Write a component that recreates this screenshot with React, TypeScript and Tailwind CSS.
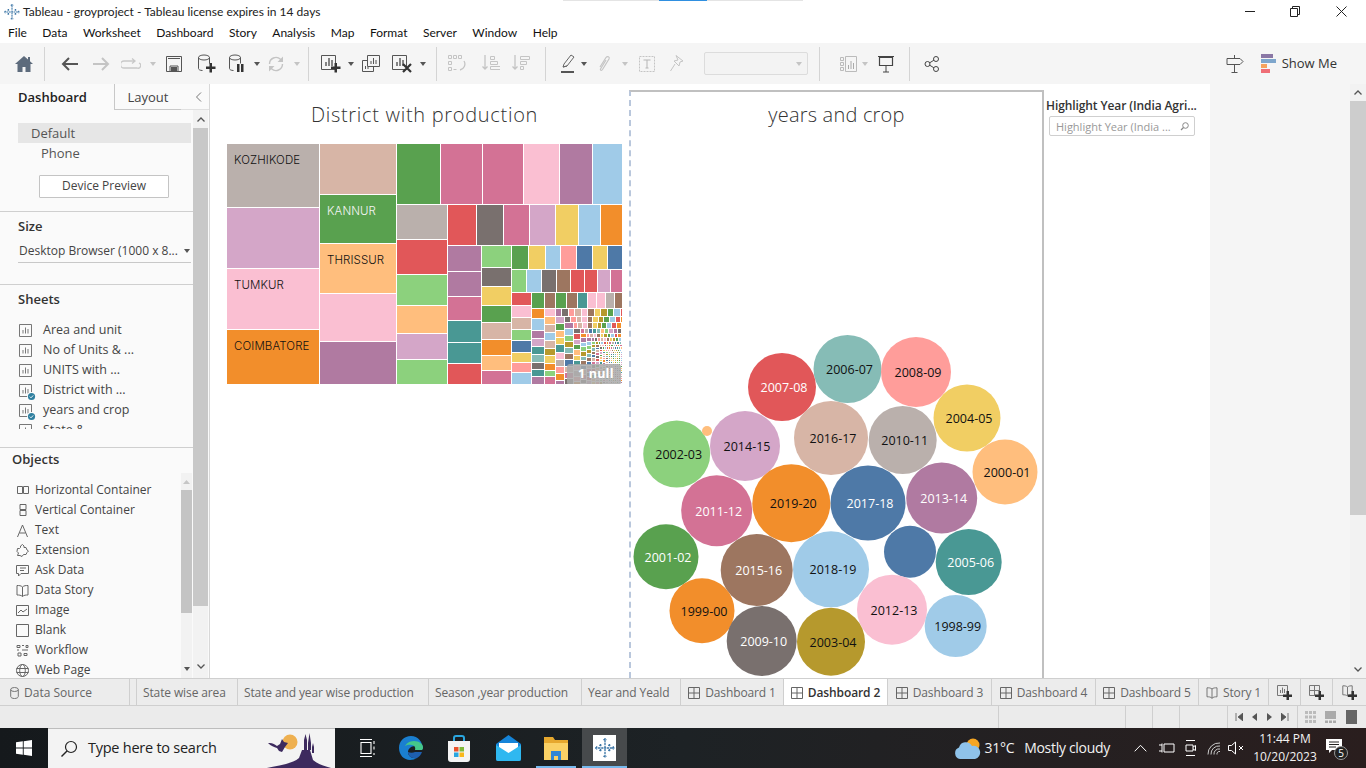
import type { ReactNode } from 'react';

const steel = '#4e79a7', blue = '#a0cbe8', orange = '#f28e2b', peach = '#ffbe7d', green = '#59a14f';
const lime = '#8cd17d', olive = '#b6992d', yellow = '#f1ce63', teal = '#499894', mint = '#86bcb6';
const red = '#e15759', salmon = '#ff9d9a', dgray = '#79706e', gray = '#bab0ac', pink = '#d37295';
const lpink = '#fabfd2', purple = '#b07aa1', lilac = '#d4a6c8', brown = '#9d7660', tan = '#d7b5a6';

type Cell = [number, number, number, number, string];

// column of cells between x0 and x1, each one [y0, y1, colour]
const col = (x0: number, x1: number, items: [number, number, string][]): Cell[] =>
  items.map(([y0, y1, c]) => [x0, y0, x1, y1, c] as Cell);
// row of cells between y0 and y1, each one [x0, x1, colour]
const row = (y0: number, y1: number, items: [number, number, string][]): Cell[] =>
  items.map(([x0, x1, c]) => [x0, y0, x1, y1, c] as Cell);

const palette = [lilac, salmon, brown, green, orange, steel, peach, purple, tan, yellow, blue, pink, teal, lime, dgray, lpink, olive, red, gray, mint];

// the long tail of the treemap: cells that get smaller towards the corner
function tinyCells(): Cell[] {
  const out: Cell[] = [];
  let x = 556, y = 309, size = 9, n = 0;
  const x1 = 622, y1 = 384;
  while (x < x1 - 1 && y < y1 - 1) {
    const rh = Math.max(2, size * 0.85);
    for (let cx = x; cx < x1; cx += Math.max(2, size * 0.72)) {
      out.push([cx, y, Math.min(x1, cx + Math.max(2, size * 0.72) - 1), y + rh - 1, palette[(n += 7) % 20]]);
    }
    y += rh;
    const cw = Math.max(2, size * 1.05);
    for (let cy = y; cy < y1; cy += Math.max(2, size * 0.8)) {
      out.push([x, cy, x + cw - 1, Math.min(y1, cy + Math.max(2, size * 0.8) - 1), palette[(n += 3) % 20]]);
    }
    x += cw;
    size *= 0.86;
  }
  return out;
}

const cells: Cell[] = [
  ...col(227, 319, [[144, 207, gray], [208, 268, lilac], [269, 329, lpink], [330, 384, orange]]),
  ...col(320, 396, [[144, 194, tan], [195, 243, green], [244, 293, peach], [294, 341, lpink], [342, 384, purple]]),
  ...row(144, 204, [[397, 440, green], [441, 482, pink], [483, 523, pink], [524, 559, lpink], [560, 592, purple], [593, 622, blue]]),
  ...col(397, 447, [[205, 239, gray], [240, 274, red], [275, 305, lime], [306, 333, peach], [334, 359, lilac], [360, 384, lime]]),
  ...row(205, 245, [[448, 476, red], [477, 503, dgray], [504, 529, pink], [530, 555, lilac], [556, 578, yellow], [579, 600, blue], [601, 622, orange]]),
  ...col(448, 481, [[246, 271, purple], [272, 296, purple], [297, 320, pink], [321, 342, teal], [343, 363, teal], [364, 384, red]]),
  ...col(482, 511, [[246, 267, lime], [268, 286, dgray], [287, 305, yellow], [306, 322, green], [323, 339, tan], [340, 355, orange], [356, 370, peach], [371, 384, pink]]),
  ...row(246, 269, [[512, 528, green], [529, 545, yellow], [546, 560, blue], [561, 576, salmon], [577, 592, steel], [593, 607, yellow], [608, 622, steel]]),
  ...row(270, 292, [[512, 526, lime], [527, 541, blue], [542, 556, dgray], [557, 570, brown], [571, 584, red], [585, 597, red], [598, 610, lilac], [611, 622, pink]]),
  ...col(512, 531, [[293, 305, red], [306, 317, lpink], [318, 329, tan], [330, 340, lime], [341, 352, steel], [353, 362, yellow], [363, 372, salmon], [373, 384, blue]]),
  ...row(293, 308, [[532, 544, green], [545, 555, brown], [556, 566, green], [567, 577, brown], [578, 587, teal], [588, 596, lpink], [597, 605, lpink], [606, 614, gray], [615, 622, brown]]),
  ...col(532, 544, [[309, 318, orange], [319, 330, blue], [331, 338, purple], [339, 346, lilac], [347, 354, teal], [355, 362, mint], [363, 369, dgray], [370, 376, teal], [377, 384, purple]]),
  ...col(545, 555, [[309, 316, lpink], [317, 324, peach], [325, 332, tan], [333, 340, blue], [341, 348, tan], [349, 355, olive], [356, 363, yellow], [364, 370, orange], [371, 376, lime], [377, 384, pink]]),
  ...tinyCells(),
];

type Bubble = [number, number, number, string, string, string];

const bubbles: Bubble[] = [
  [847.5, 369, 34, mint, '2006-07', '#111'],
  [916, 372, 35, salmon, '2008-09', '#111'],
  [782, 387, 34, red, '2007-08', '#fff'],
  [967, 418, 33.5, yellow, '2004-05', '#111'],
  [831, 438, 37, tan, '2016-17', '#111'],
  [902.7, 440, 34, gray, '2010-11', '#111'],
  [745, 446, 35, lilac, '2014-15', '#111'],
  [676.7, 454, 33.5, lime, '2002-03', '#111'],
  [707, 431, 5, peach, '', '#111'],
  [1005, 472, 32.5, peach, '2000-01', '#111'],
  [941.7, 498, 35.5, purple, '2013-14', '#fff'],
  [868, 503, 37.5, steel, '2017-18', '#fff'],
  [791.3, 503.3, 39, orange, '2019-20', '#111'],
  [716.7, 510.7, 35.5, pink, '2011-12', '#fff'],
  [910, 551.7, 26, steel, '', '#fff'],
  [968.7, 562, 33, teal, '2005-06', '#fff'],
  [666, 556.7, 32.5, green, '2001-02', '#fff'],
  [756.7, 570, 36, brown, '2015-16', '#fff'],
  [831, 569.3, 38, blue, '2018-19', '#111'],
  [892, 609.7, 35, lpink, '2012-13', '#111'],
  [702, 610.7, 32.5, orange, '1999-00', '#111'],
  [955.7, 626, 31, blue, '1998-99', '#111'],
  [761.7, 641, 35, dgray, '2009-10', '#fff'],
  [831, 641.7, 34, olive, '2003-04', '#111'],
];

function Svg({ w = 18, h = 18, vb, children, className }: { w?: number; h?: number; vb?: string; children: ReactNode; className?: string }) {
  return (
    <svg width={w} height={h} viewBox={vb ?? `0 0 ${w} ${h}`} fill="none" className={className}>
      {children}
    </svg>
  );
}

const Caret = ({ on = true }: { on?: boolean }) => (
  <Svg w={6} h={4}><path d="M0 0h6L3 4z" fill={on ? '#555' : '#c4c4c4'} /></Svg>
);

const Sep = ({ className }: { className: string }) => <div className={`w-px h-[34px] bg-[#d4d4d4] ${className}`} />;

const Plus = ({ x, y }: { x: number; y: number }) => (
  <path d={`M${x + 3.5} ${y}h2.5v3.5h3.5v2.5h-3.5v3.5h-2.5v-3.5h-3.5v-2.5h3.5z`} fill="#333" />
);

const Bars = ({ c = '#555' }: { c?: string }) => <path d="M5 12V8M8 12V4M11 12V6" stroke={c} strokeWidth="1.4" />;

function TabGrid() {
  return (
    <Svg w={12} h={12}><path d="M.5.5h11v11H.5zM6 .5v11M.5 6h11" stroke="#666" /></Svg>
  );
}

function SheetIcon({ badge }: { badge?: boolean }) {
  return (
    <span className="relative w-[13px] h-[13px] shrink-0">
      <Svg w={13} h={13}>
        <path d="M.5.5h12v12H.5z" stroke="#777" />
        <path d="M4 9.5V6M6.5 9.5V3.5M9 9.5V5" stroke="#777" />
      </Svg>
      {badge && (
        <Svg w={9} h={9} className="absolute left-[8px] top-[8px]">
          <circle cx="4.5" cy="4.5" r="4.5" fill="#fafafa" />
          <circle cx="4.5" cy="4.5" r="3.6" fill="#2f7f9f" />
          <path d="m2.8 4.600 1.200 1.200 2.200-2.400" stroke="#fff" strokeWidth=".9" />
        </Svg>
      )}
    </span>
  );
}

function SheetRow({ label, badge }: { label: string; badge?: boolean }) {
  return (
    <div className="flex items-center h-5 pl-[19px] gap-[11px] text-[12.5px] text-[#444] leading-none shrink-0">
      <SheetIcon badge={badge} />
      <span>{label}</span>
    </div>
  );
}

function ObjectRow({ label, icon }: { label: string; icon: ReactNode }) {
  return (
    <div className="flex items-center h-5 pl-[16px] text-[12px] text-[#444] leading-none shrink-0">
      <span className="w-[13px] h-[13px] flex items-center justify-center shrink-0 mr-[6px]">{icon}</span>
      <span>{label}</span>
    </div>
  );
}

const stroke = '#666';

function Sidebar() {
  return (
    <aside className="w-[210px] shrink-0 h-full bg-[#fafafa] border-r border-[#d8d8d8] flex flex-col overflow-hidden">
      <div className="h-[26px] flex shrink-0 text-[13px] leading-none">
        <div className="w-[114px] flex items-center pl-[18px] font-semibold text-[#222]">Dashboard</div>
        <div className="w-[67px] flex items-center justify-center pt-[2px] bg-[#fafafa] border-l border-b border-[#c8c8c8] text-[#444]">Layout</div>
        <div className="flex-1 flex items-center justify-end pr-[7px] border-b border-[#e0e0e0]">
          <Svg w={7} h={10}><path d="M6 .5 1.5 5 6 9.5" stroke="#777" /></Svg>
        </div>
      </div>
      <div className="flex flex-1 min-h-0">
        <div className="w-[193px] shrink-0 flex flex-col">
          <div className="h-[102px] shrink-0 border-b border-[#cfcfcf] pl-[18px] pt-[13px] text-[13px] text-[#555]">
            <div className="w-[173px] h-5 bg-[#e6e6e6] pl-[13px] flex items-center leading-none">Default</div>
            <div className="h-5 pl-[23px] flex items-center leading-none">Phone</div>
            <div className="ml-[21px] mt-[12px] w-[130px] h-[23px] pb-[2px] bg-white border border-[#c4c4c4] rounded-[1px] flex items-center justify-center text-[12px] leading-none text-[#444]">Device Preview</div>
          </div>
          <div className="h-[73px] shrink-0 border-b border-[#cfcfcf] pl-[18px] pt-[6px]">
            <div className="text-[13px] font-semibold leading-4 text-[#333]">Size</div>
            <div className="mt-[9px] w-[173px] h-[20px] border-b border-[#c8c8c8] flex items-start justify-between text-[12px] leading-4 text-[#444]">
              <span className="ml-px whitespace-nowrap">Desktop Browser (1000 x 8...</span>
              <span className="mt-[6px] mr-[1px]"><Caret /></span>
            </div>
          </div>
          <div className="h-[163px] shrink-0 border-b border-[#cfcfcf] flex flex-col">
            <div className="pl-[18px] pt-[6px] text-[13px] font-semibold leading-4 text-[#333] h-[35px] shrink-0">Sheets</div>
            <div className="h-[109px] overflow-hidden flex flex-col">
              <SheetRow label="Area and unit" />
              <SheetRow label="No of Units & ..." />
              <SheetRow label="UNITS with ..." />
              <SheetRow label="District with ..." badge />
              <SheetRow label="years and crop" badge />
              <SheetRow label="State & ..." />
            </div>
          </div>
          <div className="flex-1 min-h-0 flex flex-col">
            <div className="h-[25px] shrink-0 pl-[12px] pt-[3px] text-[13px] font-semibold leading-4 text-[#333]">Objects</div>
            <div className="flex flex-1 min-h-0">
              <div className="w-[181px] shrink-0 pt-[7px] overflow-hidden flex flex-col">
                <ObjectRow label="Horizontal Container" icon={<Svg w={12} h={8}><path d="M.5.5h5v7h-5zM6.5.5h5v7h-5z" stroke={stroke} /></Svg>} />
                <ObjectRow label="Vertical Container" icon={<Svg w={8} h={12}><path d="M1 .5h6v5H1zM1 6.5h6v5H1z" stroke={stroke} /></Svg>} />
                <ObjectRow label="Text" icon={<Svg w={11} h={13}><path d="M.5 13 5.5 1l5 12M2.5 9h6" stroke={stroke} /></Svg>} />
                <ObjectRow label="Extension" icon={<Svg w={13} h={13}><path d="M1.500 4.500h2l1-1V2l2-1.500L8 2v1.500h2l1 2.500 1.500 1-1.500 1.500-1 2H7.500L6 12.500 4 11.500H1.500L2.500 9 1 7.500z" stroke={stroke} /></Svg>} />
                <ObjectRow label="Ask Data" icon={<Svg w={13} h={13}><path d="M.5 1.500h12v8H5L2.500 12V9.500H.5zM4 4h6M4 6.500h4" stroke={stroke} /></Svg>} />
                <ObjectRow label="Data Story" icon={<Svg w={13} h={13}><path d="M6.500 3C5 1.500 3 1.500 1 1.500v9.500c2 0 4 0 5.500 1.500 1.500-1.500 3.500-1.500 5.500-1.500V1.500c-2 0-4 0-5.500 1.500zM6.500 3v9.500" stroke={stroke} /></Svg>} />
                <ObjectRow label="Image" icon={<Svg w={13} h={13}><path d="M.5 1.500h12v10H.5zM2 9l3-3 2 2 4-3" stroke={stroke} /></Svg>} />
                <ObjectRow label="Blank" icon={<Svg w={13} h={13}><path d="M.5.500h12v12H.5z" stroke={stroke} /></Svg>} />
                <ObjectRow label="Workflow" icon={<Svg w={13} h={13}><path d="M1 1.500h3v2H1zM6 1.500h2M10 1.500h2v2h-2zM1 6h2M6 6h6M2 9h3v3H2zM8 9.500h3v2H8z" stroke={stroke} /></Svg>} />
                <ObjectRow label="Web Page" icon={<Svg w={13} h={13}><circle cx="6.500" cy="6.500" r="6" stroke={stroke} /><ellipse cx="6.500" cy="6.500" rx="2.800" ry="6" stroke={stroke} /><path d="M.5 4.500h12M.5 8.500h12" stroke={stroke} /></Svg>} />
              </div>
              <div className="w-[11px] shrink-0 bg-[#f2f2f2] flex flex-col items-center">
                <div className="h-[17px] flex items-center shrink-0"><Svg w={7} h={4}><path d="M0 4h7L3.500 0z" fill="#c6c6c6" /></Svg></div>
                <div className="w-full h-[123px] bg-[#c4c4c4] shrink-0" />
                <div className="mt-[54px] shrink-0"><Caret /></div>
              </div>
            </div>
          </div>
        </div>
        <div className="w-[15px] shrink-0 bg-[#f2f2f2] flex flex-col items-center">
          <div className="h-[18px] flex items-center shrink-0"><Svg w={8} h={5}><path d="M.5 4.500 4 1l3.500 3.500" stroke="#555" strokeWidth="1.300" /></Svg></div>
          <div className="w-full h-[478px] bg-[#c8c8c8] shrink-0" />
          <div className="mt-[58px] shrink-0"><Svg w={8} h={5}><path d="M.5.500 4 4 7.500.500" stroke="#555" strokeWidth="1.300" /></Svg></div>
        </div>
      </div>
    </aside>
  );
}

function Treemap() {
  return (
    <svg width={395} height={240} viewBox="227 144 395 240" className="block shrink-0">
      <g shapeRendering="crispEdges">
        {cells.map(([x0, y0, x1, y1, c], i) => (
          <rect key={i} x={x0} y={y0} width={x1 - x0} height={y1 - y0} fill={c} />
        ))}
      </g>
      <g fontSize="11.500" fontFamily="Inter, sans-serif" fontWeight="300" letterSpacing=".1">
        <text x={234} y={164} fill="#111">KOZHIKODE</text>
        <text x={234} y={289} fill="#111">TUMKUR</text>
        <text x={234} y={350} fill="#111">COIMBATORE</text>
        <text x={327} y={215} fill="#f5f5f5">KANNUR</text>
        <text x={327} y={264} fill="#111">THRISSUR</text>
      </g>
      <rect x={567} y={364} width={54} height={21} rx={3} fill="#a9a9a9" fillOpacity=".85" />
      <text x={578} y={378} fill="#fff" fontSize="12.500" fontWeight="700" letterSpacing=".2" fontFamily="Open Sans, sans-serif">1 null</text>
    </svg>
  );
}

function BubbleChart() {
  return (
    <svg width={411} height={345} viewBox="631 333 411 345" className="block shrink-0 mt-auto">
      {bubbles.map(([x, y, r, c, label, ink], i) => (
        <g key={i}>
          <circle cx={x} cy={y} r={r} fill={c} />
          {label && (
            <text x={x + 2} y={y + 5} textAnchor="middle" fill={ink} fontSize="12.500" fontFamily="Open Sans, sans-serif">{label}</text>
          )}
        </g>
      ))}
    </svg>
  );
}

function Canvas() {
  return (
    <div className="w-[1000px] shrink-0 h-full bg-white flex pt-[6px] overflow-hidden">
      <div className="w-[419px] shrink-0 flex flex-col pl-[17px]">
        <div className="w-[395px] h-[54px] flex items-start justify-center pt-[11px] text-[20px] tracking-[.7px] leading-[28px] font-light text-[#333]">District with production</div>
        <Treemap />
      </div>
      <div className="w-[415px] shrink-0 h-full flex flex-col border-t-2 border-r-2 border-[#c0c0c0] border-l-2 border-l-[#b9c7dc] [border-left-style:dashed]">
        <div className="h-[52px] shrink-0 flex justify-center pt-[9px] text-[20px] tracking-[.2px] leading-[28px] font-light text-[#333]">years and crop</div>
        <BubbleChart />
      </div>
      <div className="flex-1 pl-[2px] pt-[8px]">
        <div className="text-[12px] font-semibold tracking-[-.1px] leading-4 text-[#333] whitespace-nowrap">Highlight Year (India Agri...</div>
        <div className="mt-[2px] ml-[3px] w-[146px] h-[20px] border border-[#cfcfcf] rounded-[2px] flex items-center justify-between pl-[6px] pr-[5px] text-[11px] leading-none text-[#999]">
          <span className="whitespace-nowrap">Highlight Year (India ...</span>
          <Svg w={9} h={9}><circle cx="5.500" cy="3.500" r="2.800" stroke="#888" /><path d="M3.500 5.500 1 8" stroke="#888" strokeWidth="1.300" /></Svg>
        </div>
      </div>
    </div>
  );
}

function Toolbar() {
  return (
    <div className="h-[41px] shrink-0 bg-[#f5f5f5] flex items-center">
      <div className="ml-[15px] mr-[11px] w-[18px] flex">
        <Svg w={18} h={16}><path d="M9 0 0 8h2.500v8h5v-5h3v5h5V8H18L15 5.300V1h-2v2.500z" fill="#5d6b7c" /></Svg>
      </div>
      <Sep className="" />
      <div className="ml-[16px] w-[17px] flex"><Svg w={17} h={14}><path d="M17 7H2M8 1 2 7l6 6" stroke="#555" strokeWidth="2" /></Svg></div>
      <div className="ml-[15px] w-[17px] flex"><Svg w={17} h={14}><path d="M0 7h15M9 1l6 6-6 6" stroke="#c4c4c4" strokeWidth="2" /></Svg></div>
      <div className="ml-[11px] w-[20px] flex"><Svg w={20} h={12}><path d="M13 3H3a2.500 2.500 0 0 0 0 7h13a2.500 2.500 0 0 0 2-5M11 .5 14 3l-3 2.500" stroke="#c8c8c8" strokeWidth="1.300" /></Svg></div>
      <div className="ml-[9px] flex"><Caret on={false} /></div>
      <div className="ml-[10px] w-[16px] flex"><Svg w={16} h={16}><path d="M.5.5h15v15H.5z" stroke="#555" /><path d="M2 2.500h12M4 15v-5h8v5" stroke="#555" /><path d="M5 11h6v4H5z" fill="#555" /></Svg></div>
      <div className="ml-[15px] w-[20px] flex"><Svg w={20} h={20}><ellipse cx="7" cy="3.500" rx="5.500" ry="2.500" stroke="#555" /><path d="M1.500 3.500v11c0 1 1.500 2 4 2M12.500 3.500v6" stroke="#555" /><Plus x={9} y={9} /></Svg></div>
      <div className="ml-[11px] w-[20px] flex"><Svg w={20} h={20}><ellipse cx="7" cy="3.500" rx="5.500" ry="2.500" stroke="#555" /><path d="M1.500 3.500v11c0 1 1.500 2 4 2M12.500 3.500v6" stroke="#555" /><path d="M9 10h2.500v8H9zM13 10h2.500v8H13z" fill="#333" /></Svg></div>
      <div className="ml-[6px] flex"><Caret /></div>
      <div className="ml-[7px] w-[18px] flex"><Svg w={18} h={18}><path d="M2.500 9a6.500 6.500 0 0 1 11-4.700L15.500 6M15.500 9a6.500 6.500 0 0 1-11 4.700L2.500 12" stroke="#c4c4c4" strokeWidth="1.400" /><path d="M16 1.500V7h-5.500zM2 16.500V11h5.500z" fill="#c4c4c4" /></Svg></div>
      <div className="ml-[9px] flex"><Caret on={false} /></div>
      <Sep className="ml-[8px]" />
      <div className="ml-[12px] w-[21px] flex"><Svg w={21} h={19}><path d="M.5 1.500h14v14H.5z" stroke="#555" /><Bars /><Plus x={10} y={9} /></Svg></div>
      <div className="ml-[6px] flex"><Caret /></div>
      <div className="ml-[8px] w-[18px] flex"><Svg w={18} h={17}><path d="M5.500.500h12v11h-12zM.5 5.500h5M.5 5.500v11h11v-5" stroke="#555" /><path d="M9 9V6M11.500 9V3M14 9V5M3.500 14v-3M6 14v-2" stroke="#555" /></Svg></div>
      <div className="ml-[12px] w-[21px] flex"><Svg w={21} h={19}><path d="M.5 1.500h14v14H.5z" stroke="#555" /><Bars /><path d="m11 10 8 8M19 10l-8 8" stroke="#333" strokeWidth="2.200" /></Svg></div>
      <div className="ml-[7px] flex"><Caret /></div>
      <Sep className="ml-[10px]" />
      <div className="ml-[11px] w-[18px] flex"><Svg w={18} h={18}><path d="M.5.500h3v3h-3zM5.500.500h3v3h-3zM10.500.500h3v3h-3zM.5 6.500h3v3h-3zM.5 12.500h3v3h-3zM5.500 14.500h3" stroke="#c4c4c4" /><path d="M16 6a6 6 0 0 1-4 9" stroke="#c4c4c4" strokeWidth="1.300" /></Svg></div>
      <div className="ml-[16px] w-[18px] flex"><Svg w={18} h={17}><path d="M3 0v14M.5 11.500 3 14l2.500-2.500" stroke="#c4c4c4" strokeWidth="1.300" /><path d="M8.500 1.500h4v3h-4zM8.500 6.500h7v3h-7zM8.500 11.500h10v3h-10z" stroke="#c4c4c4" /></Svg></div>
      <div className="ml-[12px] w-[18px] flex"><Svg w={18} h={17}><path d="M3 0v14M.5 11.500 3 14l2.500-2.500" stroke="#c4c4c4" strokeWidth="1.300" /><path d="M8.500 1.500h9v3h-9zM8.500 6.500h6v3h-6zM8.500 11.500h3v3h-3z" stroke="#c4c4c4" /></Svg></div>
      <Sep className="ml-[15px]" />
      <div className="ml-[14px] w-[15px] flex"><Svg w={15} h={19}><path d="m3 13 1-3 7-9 3 2-7 9zM3 13l4-1" stroke="#666" /><path d="M1 17h13v2H1z" fill="#555" /></Svg></div>
      <div className="ml-[6px] flex"><Caret /></div>
      <div className="ml-[11px] w-[13px] flex"><Svg w={13} h={18}><path d="M2 12 8 2.500c1.500-2 4-.5 3 1.500L4.500 14.500c-1 1.500-2.500.5-2-.5l5.500-9" stroke="#c4c4c4" strokeWidth="1.200" /></Svg></div>
      <div className="ml-[11px] flex"><Caret on={false} /></div>
      <div className="ml-[11px] w-[16px] flex"><Svg w={16} h={16}><path d="M.5.500h15v15H.5z" stroke="#c4c4c4" strokeDasharray="2 1" /><path d="M4.500 4h7M8 4v8M6.500 12h3" stroke="#b5b5b5" /></Svg></div>
      <div className="ml-[15px] w-[14px] flex"><Svg w={14} h={17}><path d="M6 .5 13 6l-3 1-1 4-5-5 4-1zM5 9l-4.500 7" stroke="#c4c4c4" /></Svg></div>
      <div className="ml-[20px] w-[104px] h-[23px] bg-[#f3f3f3] border border-[#dcdcdc] rounded-[2px] flex items-center justify-end pr-[5px]">
        <Caret on={false} />
      </div>
      <Sep className="ml-[11px]" />
      <div className="ml-[20px] w-[17px] flex"><Svg w={17} h={16}><path d="M.5 1.500h3v3h-3zM.5 6.500h3v3h-3zM.5 11.500h3v3h-3zM5.500.500h11v15h-11z" stroke="#bbb" /><path d="M8.500 13V9M11 13V5M13.500 13V7" stroke="#aaa" /></Svg></div>
      <div className="ml-[5px] flex"><Caret on={false} /></div>
      <div className="ml-[10px] w-[16px] flex"><Svg w={16} h={18}><path d="M0 1.500h16M1.500 2.500h13v8h-13z" stroke="#444" strokeWidth="1.200" /><path d="M8 10.500V17M5 17h6" stroke="#444" /></Svg></div>
      <Sep className="ml-[15px]" />
      <div className="ml-[14px] w-[16px] flex"><Svg w={16} h={16}><circle cx="3.500" cy="8" r="2.500" stroke="#444" /><circle cx="12" cy="3" r="2.500" stroke="#444" /><circle cx="12" cy="13" r="2.500" stroke="#444" /><path d="m5.700 6.800 4.200-2.600M5.700 9.200l4.200 2.600" stroke="#444" /></Svg></div>
      <div className="ml-auto w-[18px] flex"><Svg w={18} h={18}><path d="M1 3.500h13l3 3-3 3H1zM8.500 0v3.500M8.500 9.500V18M5.500 17.500h6" stroke="#555" /></Svg></div>
      <div className="ml-[17px] w-[15px] flex flex-col gap-px">
        <span className="w-[12px] h-[4px] bg-[#8a77a5]" />
        <span className="w-[15px] h-[4px] bg-[#7ea6cc]" />
        <span className="w-[6px] h-[4px] bg-[#f5a25d]" />
        <span className="w-[9px] h-[4px] bg-[#ef6e76]" />
      </div>
      <span className="ml-[6px] mr-[29px] text-[13px] leading-none text-[#333]">Show Me</span>
    </div>
  );
}

function Tab({ className, children, active }: { className: string; children: ReactNode; active?: boolean }) {
  return (
    <div className={`shrink-0 h-full flex items-center justify-center gap-[5px] pt-[1px] border-r border-[#cfcfcf] text-[12px] tracking-[-.12px] leading-none whitespace-nowrap ${active ? 'bg-white font-semibold text-[#333]' : 'text-[#666]'} ${className}`}>
      {children}
    </div>
  );
}

function TabBar() {
  return (
    <div className="h-[28px] shrink-0 bg-[#ececec] border-t border-b border-[#cfcfcf] flex">
      <div className="w-[130px] shrink-0 h-full flex items-center pl-[10px] pt-[1px] gap-[5px] border-r border-[#cfcfcf] text-[12px] leading-none text-[#666]">
        <Svg w={9} h={12}><ellipse cx="4.500" cy="2.500" rx="3.800" ry="2" stroke="#777" /><path d="M.7 2.500v7c0 1 1.500 2 3.800 2s3.800-1 3.800-2v-7" stroke="#777" /></Svg>
        Data Source
      </div>
      <div className="w-[7px] shrink-0 h-full border-r border-[#cfcfcf]" />
      <Tab className="w-[101px] !justify-start pl-[6px]">State wise area</Tab>
      <Tab className="w-[191px] !justify-start pl-[6px]">State and year wise production</Tab>
      <Tab className="w-[153px] !justify-start pl-[6px]">Season ,year production</Tab>
      <Tab className="w-[99px] !justify-start pl-[6px]">Year and Yeald</Tab>
      <Tab className="w-[103px]"><TabGrid />Dashboard 1</Tab>
      <Tab className="w-[104px]" active><TabGrid />Dashboard 2</Tab>
      <Tab className="w-[104px]"><TabGrid />Dashboard 3</Tab>
      <Tab className="w-[104px]"><TabGrid />Dashboard 4</Tab>
      <Tab className="w-[103px]"><TabGrid />Dashboard 5</Tab>
      <Tab className="w-[70px]"><Svg w={12} h={12}><path d="M6 2C4.500.8 3 .8 1 .8v9c2 0 3.500 0 5 1.500 1.500-1.500 3-1.500 5-1.500v-9c-2 0-3.500 0-5 1.200zM6 2v9.300" stroke="#777" /></Svg>Story 1</Tab>
      <Tab className="w-[32px]"><Svg w={15} h={15}><path d="M.5.500h10v10H.5z" stroke="#777" /><path d="M3.500 8V5M5.500 8V2.500M7.500 8V4" stroke="#777" /><Plus x={6} y={6} /></Svg></Tab>
      <Tab className="w-[32px]"><Svg w={15} h={15}><path d="M.5.500h10v10H.5zM5.500.500v10M.5 5.500h10" stroke="#777" /><Plus x={6} y={6} /></Svg></Tab>
      <div className="flex-1 h-full flex items-center justify-center"><Svg w={15} h={15}><path d="M5.500 2C4 .8 2.500.8.800.8v9c1.700 0 3.200 0 4.700 1.200C7 9.800 8.500 9.800 10.200 9.800v-9C8.500.8 7 .8 5.500 2zM5.500 2v9" stroke="#777" /><Plus x={6} y={6} /></Svg></div>
    </div>
  );
}

function StatusBar() {
  return (
    <div className="h-[22px] shrink-0 bg-[#ebebeb] flex">
      <div className="w-[999px] shrink-0 border-r border-[#cfcfcf]" />
      <div className="w-[127px] shrink-0 border-r border-[#cfcfcf]" />
      <div className="w-[27px] shrink-0 border-r border-[#cfcfcf]" />
      <div className="w-[27px] shrink-0 border-r border-[#cfcfcf]" />
      <div className="w-[48px] shrink-0 border-r border-[#cfcfcf]" />
      <div className="w-[70px] shrink-0 border-r border-[#cfcfcf] flex items-center pl-[7px] gap-[8px]">
        <Svg w={8} h={8}><path d="M1 0v8M8 0v8L3 4z" stroke="#555" fill="#555" strokeWidth=".8" /></Svg>
        <Svg w={7} h={8}><path d="M6 0v8L1 4z" fill="#555" /></Svg>
        <Svg w={7} h={8}><path d="M1 0v8l5-4z" fill="#555" /></Svg>
        <Svg w={8} h={8}><path d="M7 0v8M0 0v8l5-4z" stroke="#555" fill="#555" strokeWidth=".8" /></Svg>
      </div>
      <div className="flex-1 flex items-center pl-[7px] gap-[9px]">
        <Svg w={11} h={12}><path d="M0 0h3v3H0zM4 0h3v3H4zM8 0h3v3H8zM0 4.500h3v3H0zM4 4.500h3v3H4zM8 4.500h3v3H8zM0 9h3v3H0zM4 9h3v3H4zM8 9h3v3H8z" fill="#bbb" /></Svg>
        <Svg w={11} h={12}><path d="M0 0h11v8H0zM0 9.500h3V12H0zM4 9.500h3V12H4zM8 9.500h3V12H8z" fill="#aaa" /></Svg>
        <span className="ml-[1px] w-[11px] h-[14px] bg-[#666]" />
      </div>
    </div>
  );
}

const TableauMark = ({ s = 18 }: { s?: number }) => (
  <svg width={s} height={s} viewBox="0 0 18 18" fill="none">
    <path d="M9 2v14M3 9h12M5 5.500V8M3.800 6.700h2.400M13 5.500V8M11.800 6.700h2.400M5 10v2.500M3.800 11.200h2.400M13 10v2.500M11.800 11.200h2.400M9 0v3M7.500 1.500h3M9 15v3M7.500 16.500h3M0 9h3M1.500 7.500v3M15 9h3M16.500 7.500v3" stroke="#3c76a6" strokeWidth="1.200" strokeDasharray="2 .6" />
  </svg>
);

function Taskbar() {
  return (
    <div className="h-[40px] shrink-0 bg-gradient-to-r from-[#15191c] via-[#1d2225] to-[#2a1e1e] flex items-center text-white">
      <div className="w-[48px] shrink-0 flex justify-center">
        <Svg w={16} h={16}><path d="M0 2.300 6.800 1.300v6.200H0zM7.700 1.200 16 0v7.500H7.700zM0 8.500h6.800v6.200L0 13.700zM7.700 8.500H16V16l-8.300-1.200z" fill="#fff" /></Svg>
      </div>
      <div className="w-[287px] shrink-0 h-full bg-[#f3f3f3] border-t border-[#bdbdbd] flex items-center pl-[12px] overflow-hidden">
        <Svg w={18} h={18}><circle cx="11" cy="7" r="5.500" stroke="#222" strokeWidth="1.200" /><path d="M7 11 1.500 16.500" stroke="#222" strokeWidth="1.400" /></Svg>
        <span className="ml-[10px] text-[14.5px] tracking-[-.25px] leading-none text-[#222] font-['Open_Sans']">Type here to search</span>
        <svg width={72} height={40} viewBox="0 0 72 40" className="ml-auto shrink-0">
          <path d="M0 40c10-3 28-4 36-11l3-8h8l3 10c6 5 14 7 22 9z" fill="#3d2a5e" />
          <path d="M41 21V11l1.500-6 1.500 6V21zM45 21v-7l1.500-10 1.500 10v7zM49 24v-6l1-4 1 4v6z" fill="#3d2a5e" />
          <circle cx="27" cy="13" r="7.500" fill="#eeb050" />
          <path d="M5 14c4-.5 7 1 9 3l3-2 2-5 2 3 4 1-3 4-3 5-3-1-2-3c-3-1-6-2-9-5z" fill="#3d2a5e" />
        </svg>
      </div>
      <div className="ml-[25px] w-[16px] flex"><Svg w={16} h={18}><path d="M1 3.500h10v11H1zM0 .5h12M0 17.500h12M14 2v3M14 7.500v3M14 14v2" stroke="#fff" strokeWidth="1.100" /></Svg></div>
      <div className="ml-[22px] w-[26px] flex">
        <svg width={26} height={26} viewBox="0 0 26 26">
          <path d="M13 1C6 1 1 6 1 13c0 7 5 12 11 12 3 0 5-1 7-2-5 1-9-2-9-6 0-3 3-6 7-6 4 0 8 2 8 4C25 7 20 1 13 1z" fill="#1a7fd0" />
          <path d="M25 12c0-3-4-6-9-6-5 0-8 3-9 5 2-1 4-1.500 7-1 2 .5 4 2 3 5h7c1-1 1-2 1-3z" fill="#45c78a" />
          <path d="M10 17c0 4 4 7 9 6 2-1 4-3 5-6h-7c-2 1-5 1-7 0z" fill="#1e5fb0" />
        </svg>
      </div>
      <div className="ml-[23px] w-[24px] flex">
        <svg width={24} height={27} viewBox="0 0 24 27">
          <path d="M7 6V3a2 2 0 0 1 2-2h6a2 2 0 0 1 2 2v3" stroke="#2aa6e0" strokeWidth="2" fill="none" />
          <path d="M1 6h22v18a3 3 0 0 1-3 3H4a3 3 0 0 1-3-3z" fill="#f4f4f4" />
          <path d="M7 12h4.500v4.500H7z" fill="#e8532d" /><path d="M12.500 12H17v4.500h-4.500z" fill="#7fb93a" />
          <path d="M7 17.500h4.500V22H7z" fill="#2aa6e0" /><path d="M12.500 17.500H17V22h-4.500z" fill="#f9b81c" />
        </svg>
      </div>
      <div className="ml-[25px] w-[25px] flex">
        <svg width={25} height={26} viewBox="0 0 25 26">
          <path d="M12.500 0 25 9v15a2 2 0 0 1-2 2H2a2 2 0 0 1-2-2V9z" fill="#1584d8" />
          <path d="M3 8h19v6l-9.500 6L3 14z" fill="#fff" />
          <path d="m0 10 12.500 8L25 10v14a2 2 0 0 1-2 2H2a2 2 0 0 1-2-2z" fill="#2fb8f0" />
        </svg>
      </div>
      <div className="ml-[15px] relative w-[40px] h-full flex items-center justify-center">
        <svg width={24} height={24} viewBox="0 0 24 24">
          <path d="M0 1h9l2 3h13v20H0z" fill="#e6a82e" />
          <path d="M0 7h24v17H0z" fill="#fad165" />
          <path d="M7 15h10v9h-3v-4h-4v4H7z" fill="#2f86d6" />
        </svg>
        <span className="absolute left-0 right-0 bottom-0 h-[2px] bg-[#76b9ed]" />
      </div>
      <div className="ml-[6px] relative w-[45px] h-full bg-[#474a4c] flex items-center justify-center">
        <div className="w-[23px] h-[26px] bg-white flex items-center justify-center"><TableauMark s={20} /></div>
        <span className="absolute left-0 right-0 bottom-0 h-[2px] bg-[#76b9ed]" />
      </div>
      <div className="ml-auto flex items-center h-full">
        <svg width={27} height={22} viewBox="0 0 27 22">
          <circle cx="19" cy="8" r="6.500" fill="#f5a623" />
          <path d="M6 22a6 6 0 0 1-1-11.500A7 7 0 0 1 18 9a6.500 6.500 0 0 1 3 13z" fill="#8fc3ea" />
        </svg>
        <span className="ml-[4px] text-[14px] tracking-[-.3px] leading-none text-[#f2f2f2]">31°C</span>
        <span className="ml-[10px] text-[14px] tracking-[-.3px] leading-none text-[#f2f2f2]">Mostly cloudy</span>
        <div className="ml-[24px] w-[13px] flex"><Svg w={13} h={8}><path d="m.7 7.300 5.800-6 5.800 6" stroke="#fff" /></Svg></div>
        <div className="ml-[12px] w-[16px] flex"><Svg w={16} h={14}><path d="M5 3h10v8H5zM0 4h3M0 10h3M3 2.500v9" stroke="#fff" /></Svg></div>
        <div className="ml-[10px] w-[11px] flex"><Svg w={11} h={16}><path d="M1 .5h9M1 15.500h9M1 5h7v6H1zM8 7l2.500-1.500v5L8 9" stroke="#fff" /></Svg></div>
        <div className="ml-[11px] w-[14px] flex"><Svg w={14} h={13}><path d="M1 12.500A11 11 0 0 1 13 1M4 12.500A8 8 0 0 1 13 4M7 12.500A5 5 0 0 1 13 7M10 12.500a2.500 2.500 0 0 1 3-3" stroke="#ccc" /></Svg></div>
        <div className="ml-[7px] w-[18px] flex"><Svg w={18} h={14}><path d="M.5 4.500h3L7.500 1v12l-4-3.500h-3z" stroke="#fff" /><path d="m11 5 4 4M15 5l-4 4" stroke="#fff" /></Svg></div>
        <div className="ml-[6px] w-[66px] flex flex-col items-center text-[12px] leading-[18px] text-[#f2f2f2]">
          <span>11:44 PM</span>
          <span>10/20/2023</span>
        </div>
        <div className="ml-[6px] mr-[18px] relative w-[24px] h-[24px]">
          <Svg w={16} h={15} className="mt-[3px] ml-[2px]"><path d="M0 0h16v11H6l-3 3v-3H0z" fill="#fff" /><path d="M3 3h10M3 5.500h10M3 8h7" stroke="#222" /></Svg>
          <span className="absolute right-0 bottom-0 w-[14px] h-[14px] rounded-full bg-[#222] border border-[#999] flex items-center justify-center text-[10px] leading-none">5</span>
        </div>
      </div>
    </div>
  );
}

export default function App() {
  return (
    <div className="w-[1366px] h-[768px] overflow-hidden flex flex-col bg-white font-['Open_Sans',sans-serif] relative">
      <div className="absolute left-[563px] top-0 w-[240px] h-px bg-[#e4e4e4]" />
      <div className="absolute left-[659px] top-0 w-[48px] h-[1px] bg-[#2f8fe0]" />
      {/* title bar */}
      <div className="h-[23px] shrink-0 flex items-center pl-[4px]">
        <TableauMark s={16} />
        <span className="ml-[3px] font-['Lato'] text-[12px] leading-none text-[#222] whitespace-nowrap">Tableau - groyproject - Tableau license expires in 14 days</span>
        <div className="ml-auto flex items-center">
          <div className="w-[10px] h-px bg-[#222]" />
          <div className="ml-[35px]"><Svg w={10} h={11}><path d="M2.500 2.500V.5h7v8h-2M.5 2.500h7v8h-7z" stroke="#222" /></Svg></div>
          <div className="ml-[36px] mr-[19px]"><Svg w={11} h={11}><path d="m.5.5 10 10M10.500.5l-10 10" stroke="#222" /></Svg></div>
        </div>
      </div>
      {/* menu bar */}
      <div className="h-[20px] shrink-0 flex items-center pl-[8px] gap-[15.5px] font-['Lato'] text-[12px] leading-none text-[#111]">
        {['File', 'Data', 'Worksheet', 'Dashboard', 'Story', 'Analysis', 'Map', 'Format', 'Server', 'Window', 'Help'].map((m) => (
          <span key={m}>{m}</span>
        ))}
      </div>
      <Toolbar />
      <div className="flex-1 min-h-0 flex bg-[#f5f5f5]">
        <Sidebar />
        <Canvas />
        <div className="flex-1" />
        <div className="w-[16px] shrink-0 bg-[#f2f2f2] flex flex-col items-center">
          <div className="h-[17px] flex items-center shrink-0"><Svg w={8} h={5}><path d="M.5 4.500 4 1l3.500 3.500" stroke="#555" strokeWidth="1.300" /></Svg></div>
          <div className="w-full h-[414px] bg-[#cdcdcd] shrink-0" />
          <div className="mt-auto h-[17px] flex items-center shrink-0"><Svg w={8} h={5}><path d="M.5.500 4 4 7.500.500" stroke="#555" strokeWidth="1.300" /></Svg></div>
        </div>
      </div>
      <TabBar />
      <StatusBar />
      <Taskbar />
    </div>
  );
}
